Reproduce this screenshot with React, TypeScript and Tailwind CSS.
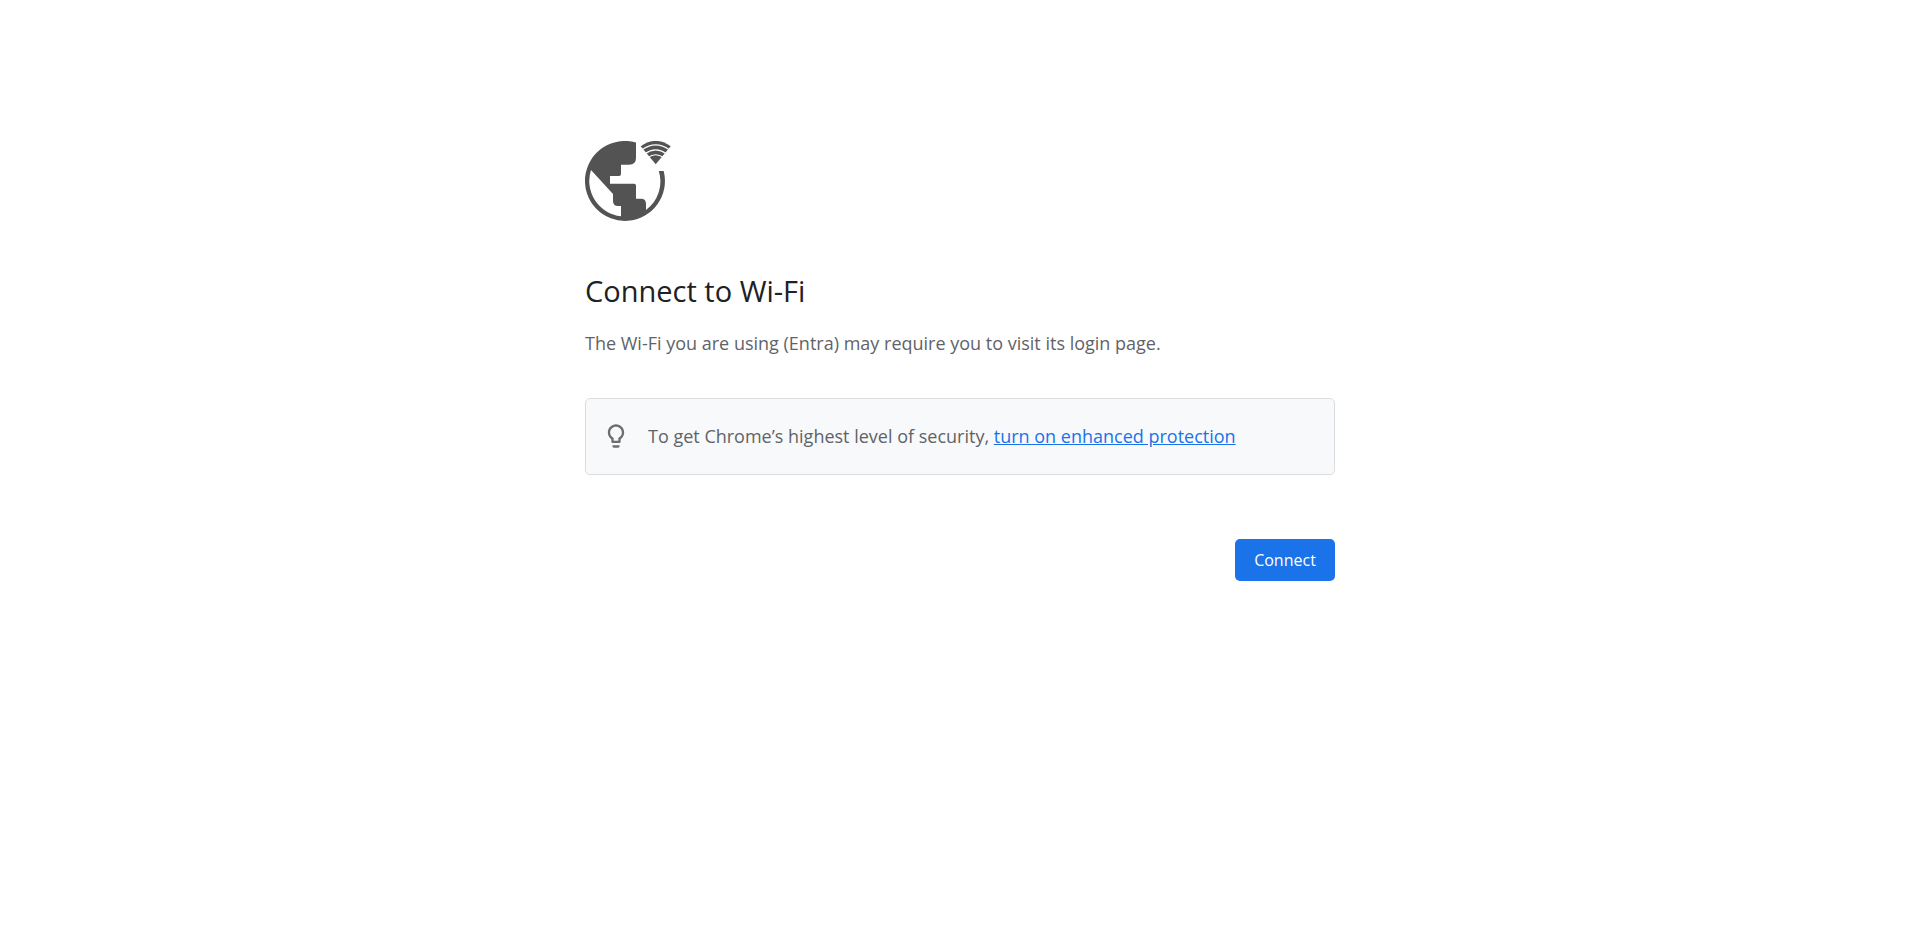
import React from "react";

function GlobeWifiIcon() {
  return (
    <svg viewBox="0 0 86 80" className="h-20 w-[86px] fill-[#535353]" aria-hidden="true">
      <path
        fillRule="evenodd"
        d="M51 1.5A40 40 0 1 0 78.7 30H73.800A35.300 35.300 0 0 1 61 69V63Q61 57.700 56 57.700H51V44.500Q51 42.700 49 42.700H25V35H34Q36 35 36 33V23.700H44Q51 23.700 51 17ZM6 29L28 53V60Q28 65 33 65H36V75.300A35.500 35.500 0 0 1 6 29Z"
      />
      <path d="M70.700 23.200L55.700 5.200Q70.700 -5.400 85.700 5.200Z" />
      <g className="fill-none stroke-white" strokeWidth="1.1">
        <path d="M57 8.800Q70.700 -1 84.400 8.800" />
        <path d="M60 12.700Q70.700 5 81.400 12.700" />
        <path d="M63 16.400Q70.700 11 78.400 16.400" />
      </g>
    </svg>
  );
}

function BulbIcon() {
  return (
    <svg viewBox="0 0 24 24" className="size-7 shrink-0 fill-[#6b6e6e]" aria-hidden="true">
      <path d="M9 21c0 .55.45 1 1 1h4c.55 0 1-.45 1-1v-1H9v1zm3-19C8.140 2 5 5.140 5 9c0 2.380 1.190 4.470 3 5.740V17c0 .55.45 1 1 1h6c.55 0 1-.45 1-1v-2.260c1.810-1.270 3-3.360 3-5.740 0-3.860-3.140-7-7-7zm2.850 11.100l-.85.6V16h-4v-2.300l-.85-.6C7.800 12.160 7 10.630 7 9c0-2.760 2.240-5 5-5s5 2.240 5 5c0 1.630-.8 3.160-2.150 4.100z" />
    </svg>
  );
}

export default function App() {
  return (
    <div className="min-h-screen bg-white px-6 font-['Segoe_UI','Open_Sans',sans-serif] text-lg text-[#5f6368]">
      <main className="mx-auto max-w-[750px] pt-[141px]">
        <GlobeWifiIcon />
        <h1 className="mt-12 text-[29px] leading-11 text-[#202124]">Connect to Wi-Fi</h1>
        <p className="mt-4 leading-7">
          The Wi-Fi you are using (Entra) may require you to visit its login page.
        </p>
        <section className="mt-[41px] flex items-center gap-[18px] rounded-[5px] border border-[#dadce0] bg-[#f8f9fb] px-4 pt-[23px] pb-6">
          <BulbIcon />
          <p className="leading-7">
            To get Chrome’s highest level of security,{" "}
            <a href="#enhanced-protection" className="text-[#1a73e8] underline">
              turn on enhanced protection
            </a>
          </p>
        </section>
        <div className="mt-16 flex justify-end">
          <button type="button" className="min-w-25 rounded-[5px] bg-[#1a73e8] px-4 py-[9px] text-base text-white">
            Connect
          </button>
        </div>
      </main>
    </div>
  );
}
